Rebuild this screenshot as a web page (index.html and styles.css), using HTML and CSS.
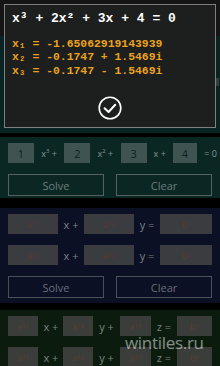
FILE: index.html
```html
<!DOCTYPE html>
<html>
<head>
<meta charset="utf-8">
<link rel="stylesheet" href="styles.css">
</head>
<body>
<div class="app">
  <div class="tray"></div>
  <section class="sec sec0"></section>
  <section class="sec cubic">
    <div class="row cubic-row">
      <div class="box">1</div><span class="lbl">x<sup>3</sup> +</span>
      <div class="box">2</div><span class="lbl">x<sup>2</sup> +</span>
      <div class="box">3</div><span class="lbl">x +</span>
      <div class="box">4</div><span class="lbl">= 0</span>
    </div>
    <div class="btns"><div class="btn">Solve</div><div class="btn">Clear</div></div>
  </section>
  <section class="sec lin2">
    <div class="row lin2-row">
      <div class="box">a<sub>11</sub></div><span class="lbl">x +</span>
      <div class="box">a<sub>12</sub></div><span class="lbl">y =</span>
      <div class="box">b<sub>1</sub></div>
    </div>
    <div class="row lin2-row">
      <div class="box">a<sub>21</sub></div><span class="lbl">x +</span>
      <div class="box">a<sub>22</sub></div><span class="lbl">y =</span>
      <div class="box">b<sub>2</sub></div>
    </div>
    <div class="btns"><div class="btn">Solve</div><div class="btn">Clear</div></div>
  </section>
  <section class="sec lin3">
    <div class="row lin3-row">
      <div class="box">a<sub>11</sub></div><span class="lbl">x +</span>
      <div class="box">a<sub>12</sub></div><span class="lbl">y +</span>
      <div class="box">a<sub>13</sub></div><span class="lbl">z =</span>
      <div class="box">b<sub>1</sub></div>
    </div>
    <div class="row lin3-row">
      <div class="box">a<sub>21</sub></div><span class="lbl">x +</span>
      <div class="box">a<sub>22</sub></div><span class="lbl">y +</span>
      <div class="box">a<sub>23</sub></div><span class="lbl">z =</span>
      <div class="box">b<sub>2</sub></div>
    </div>
  </section>
</div>

<div class="scrollmark"></div>

<div class="dialog">
  <div class="eq">x³ + 2x² + 3x + 4 = 0</div>
  <div class="roots">
    <div class="root">x₁ = -1.65062919143939</div>
    <div class="root">x₂ = -0.1747 + 1.5469i</div>
    <div class="root">x₃ = -0.1747 - 1.5469i</div>
  </div>
  <div class="ok">
    <svg width="24" height="24" viewBox="0 0 24 24">
      <circle cx="12" cy="12" r="10.8" fill="none" stroke="#ffffff" stroke-width="1.6"/>
      <path d="M6.6 12.2 L10.6 16 L17.2 8.8" fill="none" stroke="#ffffff" stroke-width="2" stroke-linecap="round" stroke-linejoin="round"/>
    </svg>
  </div>
</div>

<div class="mark">wintiles.ru</div>
</body>
</html>
```

FILE: styles.css
```css
html, body {
  margin: 0;
  padding: 0;
}
html {
  overflow: hidden;
}
body {
  width: 220px;
  height: 366px;
  overflow: hidden;
  background: #000;
  position: relative;
  font-family: "Open Sans", "Noto Sans", sans-serif;
}
.app {
  display: flex;
  flex-direction: column;
  height: 366px;
  overflow: hidden;
}
.tray {
  height: 36px;
  flex: none;
  background: #151515;
}
.sec {
  box-sizing: border-box;
  padding: 6px 8px 0 8px;
  display: flex;
  flex-direction: column;
  gap: 11px;
  flex: none;
}
.sec0 {
  height: 97px;
  padding: 0;
  background: #082523;
}
.cubic {
  margin-top: 4px;
  height: 61px;
  background: #0a2724;
}
.lin2 {
  margin-top: 10px;
  height: 95px;
  background: #0b1024;
}
.lin3 {
  margin-top: 7px;
  flex: 1 1 auto;
  min-height: 0;
  overflow: hidden;
  background: #0b1c0e;
}
.row {
  display: grid;
  height: 20px;
  flex: none;
  align-items: center;
  justify-content: space-between;
}
.cubic-row {
  width: 210px;
  grid-template-columns: 26px 18px 26px 18px 26px 14px 24px 15px;
}
.lin2-row {
  width: 204px;
  grid-template-columns: 50px 16px 50px 16px 52px;
}
.lin3-row {
  width: 204px;
  grid-template-columns: 30px 14px 30px 16px 31px 15px 35px;
}
.box {
  height: 20px;
  display: flex;
  align-items: center;
  justify-content: center;
  font-size: 9px;
}
.cubic .box {
  background: #3f5450;
  color: #0e211e;
  font-size: 11px;
}
.lin2 .box {
  background: #3a3c3f;
  color: #5a3a31;
}
.lin3 .box {
  background: #3a3d3a;
  color: #5a3d30;
}
.box sub {
  font-size: 6px;
  vertical-align: -2px;
}
.lbl {
  font-size: 10px;
  white-space: nowrap;
  text-align: center;
}
.lbl sup {
  font-size: 6px;
  vertical-align: 4px;
}
.cubic .lbl { color: #85948f; font-size: 9px; }
.lin2 .lbl { color: #7d8089; font-size: 11px; }
.lin3 .lbl { color: #7b857c; font-size: 11px; }
.btns {
  display: grid;
  grid-template-columns: 96px 96px;
  gap: 12px;
  flex: none;
}
.btn {
  box-sizing: border-box;
  height: 22px;
  border: 1px solid #55625f;
  display: flex;
  align-items: center;
  justify-content: center;
  font-size: 11px;
  color: #6e7d7a;
}
.lin2 .btn {
  border-color: #4b4f5a;
  color: #6a6e78;
}
.scrollmark {
  position: absolute;
  left: 216px;
  top: 78px;
  width: 3px;
  height: 8px;
  background: #34403e;
}
.dialog {
  position: absolute;
  left: 4px;
  top: 4px;
  width: 212px;
  height: 124px;
  box-sizing: border-box;
  border: 1px solid #7e807f;
  background: #1d1f1e;
  padding: 6px 0 0 7px;
  font-family: "Liberation Mono", "DejaVu Sans Mono", monospace;
  font-weight: bold;
}
.eq {
  color: #ffffff;
  font-size: 13px;
  line-height: 16px;
  white-space: pre;
}
.roots {
  margin-top: 11px;
  color: #eba21c;
  font-size: 11.4px;
  line-height: 13.25px;
}
.root {
  white-space: pre;
  height: 13.25px;
}
.ok {
  margin-top: 18px;
  display: flex;
  justify-content: center;
  padding-right: 7px;
}
.ok svg { display: block; }
.mark {
  position: absolute;
  left: 125px;
  top: 331px;
  font-size: 17px;
  color: rgba(255, 255, 255, 0.5);
  font-family: "Open Sans", "Noto Sans", sans-serif;
  letter-spacing: -0.3px;
}
```
